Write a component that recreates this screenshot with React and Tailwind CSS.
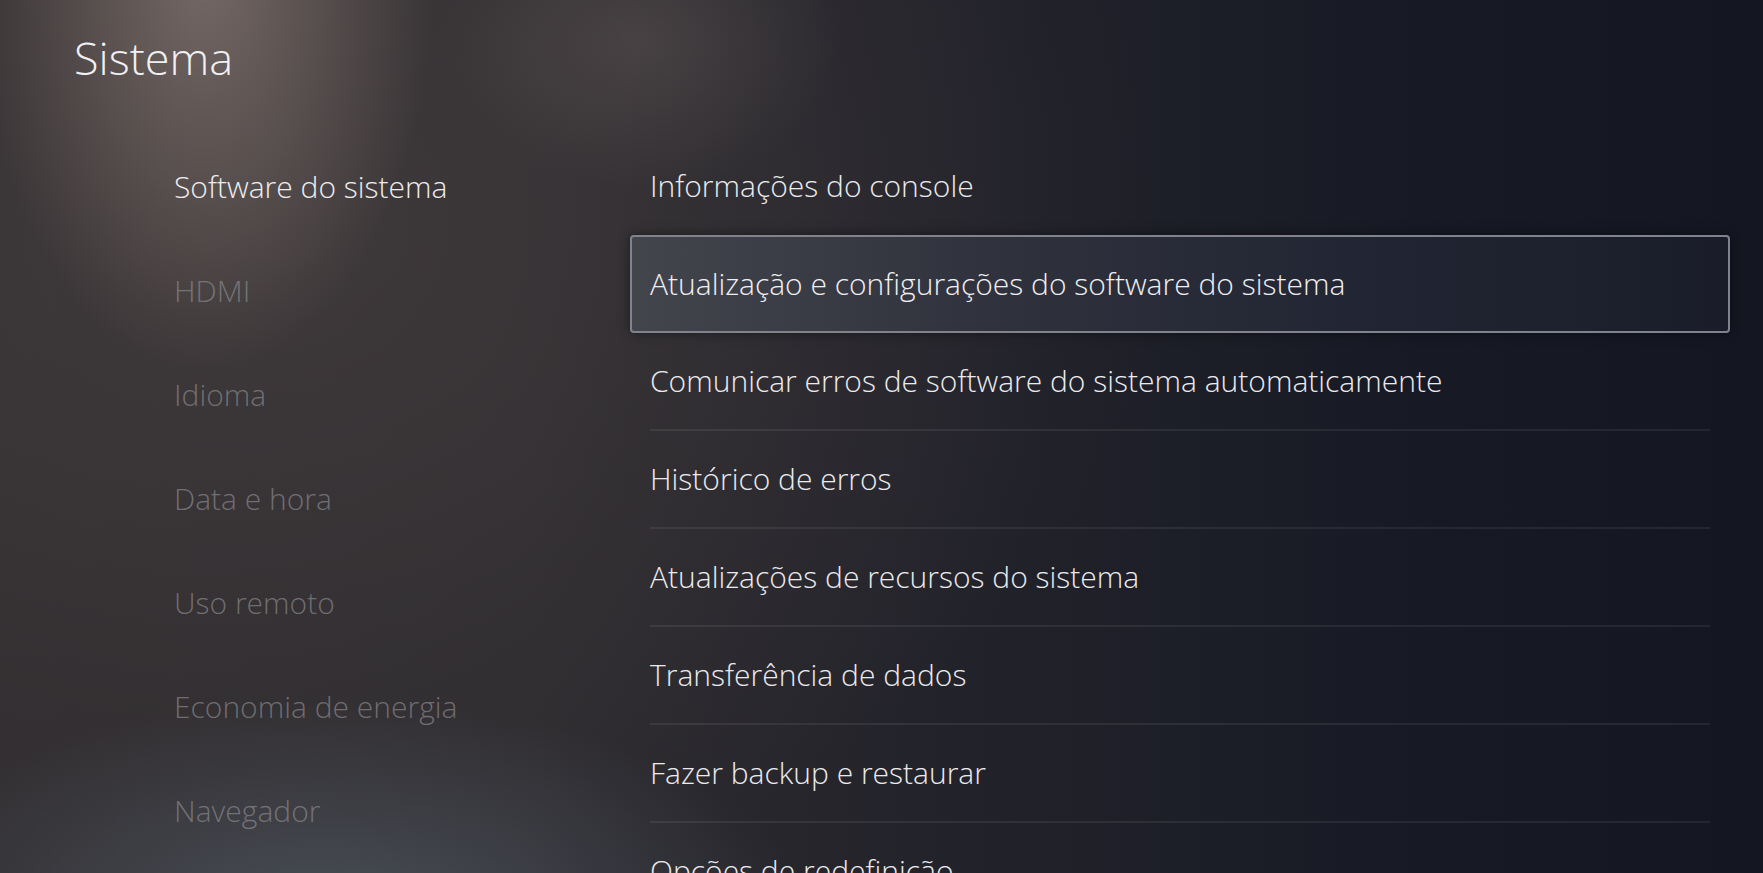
import React from "react";

const CATEGORIES = [
  "Software do sistema",
  "HDMI",
  "Idioma",
  "Data e hora",
  "Uso remoto",
  "Economia de energia",
  "Navegador",
];

const OPTIONS = [
  "Informações do console",
  "Atualização e configurações do software do sistema",
  "Comunicar erros de software do sistema automaticamente",
  "Histórico de erros",
  "Atualizações de recursos do sistema",
  "Transferência de dados",
  "Fazer backup e restaurar",
  "Opções de redefinição",
];

const SideItem = ({ label, active }) => (
  <div
    className={`h-[104px] flex items-center text-[30px] leading-none ${
      active ? "text-[#ededf0]" : "text-[#8a898d]/70"
    }`}
  >
    {label}
  </div>
);

const OptionRow = ({ label, focused, divider }) => {
  if (focused) {
    return (
      <div className="h-[98px] flex items-center pl-[18px] pr-[20px] rounded-[4px] border-2 border-[#80838c] bg-[linear-gradient(90deg,#43454d_0%,#31343e_30%,#222533_65%,#1a1d29_100%)] shadow-[0_0_12px_rgba(0,0,0,0.45)] text-[30px] leading-none text-[#efeff2]">
        {label}
      </div>
    );
  }
  return (
    <div className="h-[98px] px-[20px]">
      <div
        className={`h-full flex items-center text-[30px] leading-none text-[#ebebee] ${
          divider ? "border-b-2 border-white/[0.07]" : ""
        }`}
      >
        {label}
      </div>
    </div>
  );
};

export default function App() {
  const focusedIndex = 1;

  return (
    <div
      className="relative h-[873px] w-full overflow-hidden font-['Open_Sans',sans-serif] font-light bg-[radial-gradient(ellipse_230px_400px_at_205px_-30px,rgba(165,146,138,0.55),transparent),radial-gradient(ellipse_200px_150px_at_640px_40px,rgba(150,135,128,0.2),transparent),radial-gradient(ellipse_480px_220px_at_330px_920px,rgba(105,120,134,0.45),transparent),radial-gradient(ellipse_900px_700px_at_260px_220px,rgba(88,78,76,0.4),transparent),linear-gradient(90deg,#302d30_0%,#2d2b2f_30%,#22222a_55%,#171a25_80%,#141722_100%)]"
    >
      <h1 className="pl-[74px] pt-[35px] text-[45px] leading-none font-light text-[#f0f0f3]">
        Sistema
      </h1>

      <div className="flex items-start">
        <nav className="w-[630px] shrink-0 pl-[174px] mt-[55px]">
          {CATEGORIES.map((c, i) => (
            <SideItem key={c} label={c} active={i === 0} />
          ))}
        </nav>

        <div className="w-[1100px] mt-[57px]">
          {OPTIONS.map((o, i) => (
            <OptionRow
              key={o}
              label={o}
              focused={i === focusedIndex}
              divider={i > focusedIndex}
            />
          ))}
        </div>
      </div>
    </div>
  );
}
